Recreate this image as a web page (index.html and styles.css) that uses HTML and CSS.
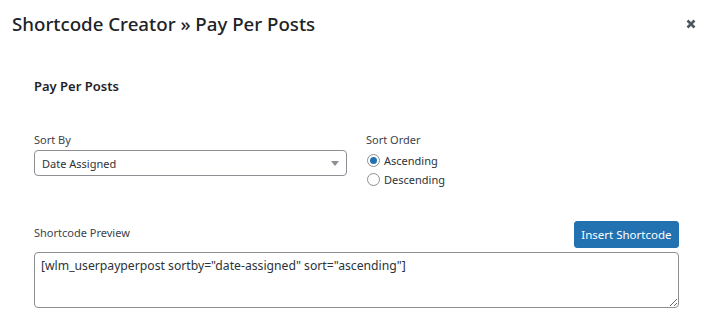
FILE: index.html
```html
<!DOCTYPE html>
<html lang="en">
<head>
    <meta charset="UTF-8">
    <title>Shortcode Creator</title>
    <link rel="stylesheet" href="styles.css">
</head>
<body>
    <div class="modal">
        <div class="modal-header">
            <h1>Shortcode Creator &raquo; Pay Per Posts</h1>
            <svg class="close" width="10" height="10" viewBox="0 0 10 10">
                <path d="M1.5 1.5 L8.5 8.5 M8.5 1.5 L1.5 8.5" stroke="#50575e" stroke-width="2.6"/>
            </svg>
        </div>
        <div class="modal-body">
            <h2>Pay Per Posts</h2>
            <div class="options">
                <div class="field sort-by">
                    <label>Sort By</label>
                    <div class="select-wrap">
                        <select>
                            <option>Date Assigned</option>
                        </select>
                        <span class="arrow"></span>
                    </div>
                </div>
                <div class="field sort-order">
                    <label>Sort Order</label>
                    <div class="radios">
                        <label class="radio"><input type="radio" name="sort" checked> Ascending</label>
                        <label class="radio"><input type="radio" name="sort"> Descending</label>
                    </div>
                </div>
            </div>
            <div class="preview-head">
                <label>Shortcode Preview</label>
                <button class="button-primary">Insert Shortcode</button>
            </div>
            <textarea class="preview">[wlm_userpayperpost sortby="date-assigned" sort="ascending"]</textarea>
        </div>
    </div>
</body>
</html>
```

FILE: styles.css
```css
body {
    margin: 0;
    background: #fff;
    font-family: "Noto Sans", "Open Sans", sans-serif;
    color: #1d2327;
}
.modal-header {
    display: flex;
    justify-content: space-between;
    align-items: center;
    height: 47px;
    padding: 0 10px 0 12px;
}
.modal-header h1 {
    margin: 0;
    font-size: 18.7px;
    font-weight: 500;
}
.close {
    display: block;
}
.modal-body {
    padding: 27px 27px 0 34px;
}
.modal-body h2 {
    margin: 0;
    font-size: 13px;
    font-weight: 600;
    line-height: 24px;
}
.options {
    display: flex;
    margin-top: 34px;
}
.field label {
    display: block;
    font-size: 11px;
    line-height: 16px;
    color: #3c434a;
}
.sort-by {
    width: 313px;
}
.sort-order {
    margin-left: 19px;
}
.select-wrap {
    position: relative;
    margin-top: 2px;
}
.select-wrap select {
    appearance: none;
    width: 100%;
    height: 26px;
    border: 1px solid #8c8f94;
    border-radius: 4px;
    background: #fff;
    padding: 0 7px;
    font-family: inherit;
    font-size: 11px;
    color: #2c3338;
}
.arrow {
    position: absolute;
    right: 8px;
    top: 11px;
    border-left: 4px solid transparent;
    border-right: 4px solid transparent;
    border-top: 5px solid #8c8f94;
}
.radios {
    margin-top: 3px;
}
.field .radio {
    display: flex;
    align-items: center;
    color: #2c3338;
    font-size: 11px;
    line-height: 19px;
}
.radio input {
    appearance: none;
    width: 13px;
    height: 13px;
    margin: 0 4px 0 1px;
    border: 1px solid #8c8f94;
    border-radius: 50%;
    background: #fff;
    display: grid;
    place-content: center;
}
.radio input:checked::before {
    content: "";
    width: 7px;
    height: 7px;
    border-radius: 50%;
    background: #2271b1;
}
.preview-head {
    display: flex;
    justify-content: space-between;
    align-items: flex-end;
    margin-top: 32px;
}
.preview-head label {
    font-size: 11px;
    line-height: 16px;
    color: #3c434a;
    padding-bottom: 7px;
}
.button-primary {
    background: #2271b1;
    border: 1px solid #2271b1;
    border-radius: 3px;
    color: #fff;
    font-family: inherit;
    font-size: 11.5px;
    height: 27px;
    padding: 0 6.5px;
}
.preview {
    display: block;
    box-sizing: border-box;
    width: 100%;
    height: 56px;
    margin-top: 4px;
    border: 1px solid #8c8f94;
    border-radius: 4px;
    padding: 4px 6px;
    font-family: inherit;
    font-size: 12.2px;
    color: #2c3338;
}
```
